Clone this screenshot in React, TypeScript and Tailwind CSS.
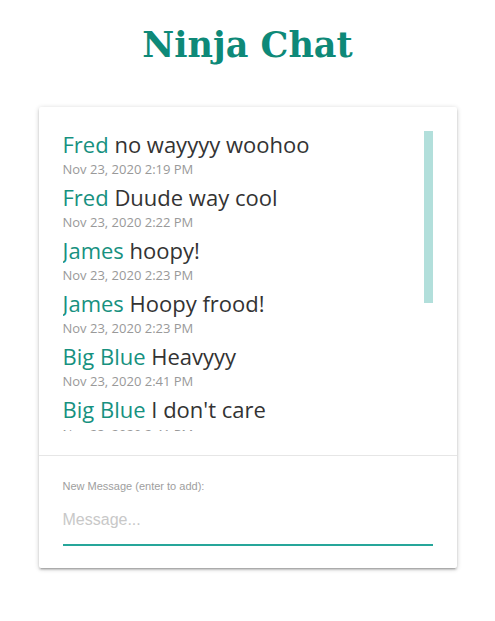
import React from "react";

const messages = [
  { name: "Fred", text: "no wayyyy woohoo", time: "Nov 23, 2020 2:19 PM" },
  { name: "Fred", text: "Duude way cool", time: "Nov 23, 2020 2:22 PM" },
  { name: "James", text: "hoopy!", time: "Nov 23, 2020 2:23 PM" },
  { name: "James", text: "Hoopy frood!", time: "Nov 23, 2020 2:23 PM" },
  { name: "Big Blue", text: "Heavyyy", time: "Nov 23, 2020 2:41 PM" },
  { name: "Big Blue", text: "I don't care", time: "Nov 23, 2020 2:41 PM" },
  { name: "Fred", text: "ok", time: "Nov 23, 2020 2:45 PM" },
];

export default function App() {
  return (
    <div className="min-h-[621px] bg-white">
      <h1
        className="pt-[25px] text-center text-[35px] leading-[40px] font-bold text-[#0e8978]"
        style={{ fontFamily: '"DejaVu Serif", serif' }}
      >
        Ninja Chat
      </h1>
      <div className="mx-auto mt-[42px] w-[418px] rounded-[2px] bg-white shadow-[0_2px_2px_0_rgba(0,0,0,0.14),0_3px_1px_-2px_rgba(0,0,0,0.12),0_1px_5px_0_rgba(0,0,0,0.2)]">
        <div className="p-6">
          <div className="relative h-[300px] overflow-hidden">
            <ul style={{ fontFamily: '"Open Sans", sans-serif' }}>
              {messages.map((m, i) => (
                <li key={i} className="mb-[4px]">
                  <div className="h-[27px] text-[22px] leading-[27px] whitespace-nowrap text-[#333]">
                    <span className="text-[#17917f]">{m.name}</span> {m.text}
                  </div>
                  <div className="h-[22px] text-[13px] leading-[22px] text-[#999]">{m.time}</div>
                </li>
              ))}
            </ul>
            <div className="absolute right-0 top-0 h-[172px] w-[9px] bg-[#b2dfdb]" />
          </div>
        </div>
        <div className="border-t border-[#e6e6e6] px-6 pt-5 pb-[22px]" style={{ fontFamily: '"Liberation Sans", Arial, sans-serif' }}>
          <label className="block text-[11px] leading-[20px] text-[#9e9e9e]">New Message (enter to add):</label>
          <input
            className="block h-[50px] w-full border-b-2 border-[#26a69a] text-[16px] text-[#333] outline-none placeholder:text-[#c8c8c8]"
            placeholder="Message..."
          />
        </div>
      </div>
    </div>
  );
}
